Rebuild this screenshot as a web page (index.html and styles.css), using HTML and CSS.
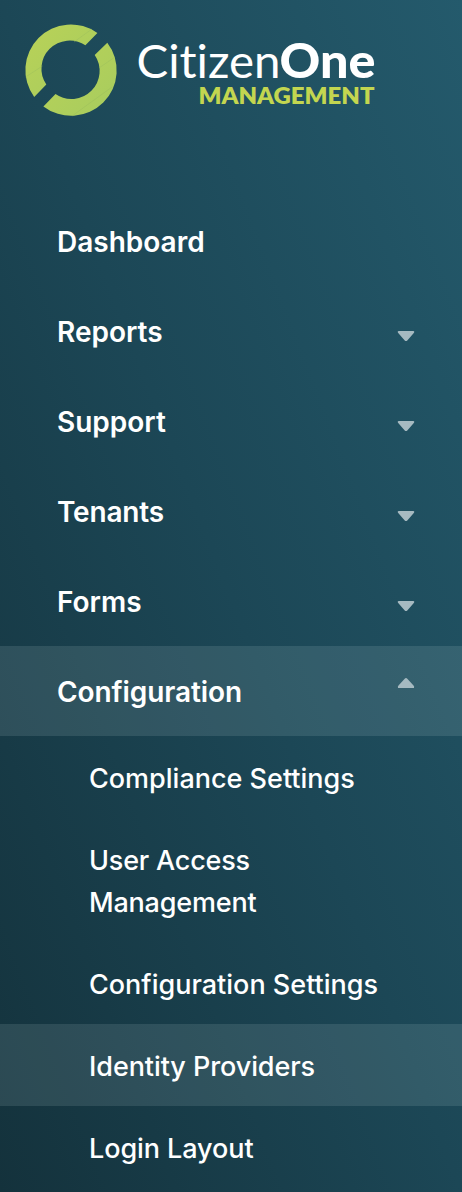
FILE: index.html
```html
<!DOCTYPE html>
<html lang="en">
<head>
<meta charset="utf-8">
<title>CitizenOne Management</title>
<link rel="stylesheet" href="styles.css">
</head>
<body>
<aside class="sidebar">
  <header class="brand">
    <svg class="logo" width="462" height="140" viewBox="0 0 462 140" role="img" aria-label="CitizenOne Management">
      <defs>
        <linearGradient id="ring" x1="0" y1="0" x2="1" y2="1">
          <stop offset="0" stop-color="#b9d257"/>
          <stop offset="1" stop-color="#a7cc5f"/>
        </linearGradient>
      </defs>
      <g transform="translate(-.3 -.3)">
        <path fill="url(#ring)" d="M97.700 33.300A45.500 45.500 0 0 0 34.500 97.200L46.600 84.800A28.200 28.200 0 0 1 85.700 45.600Z"/>
        <path fill="url(#ring)" d="M107.600 43A45.500 45.500 0 0 1 43.700 106.700L55.800 94.400A28.200 28.200 0 0 0 95 55.200Z"/>
      </g>
      <path class="seam" d="M25.500 77L42.500 66M74 42L92 29M99 68L115 57M72 116L112 87"/>
      <text class="logo-light" x="136.500" y="78" textLength="144" lengthAdjust="spacingAndGlyphs">Citizen</text>
      <text class="logo-bold" x="279.500" y="78" textLength="96" lengthAdjust="spacingAndGlyphs">One</text>
      <text class="logo-sub" x="198.500" y="103.700" textLength="176" lengthAdjust="spacingAndGlyphs">MANAGEMENT</text>
    </svg>
  </header>
  <nav class="menu">
    <a class="item"><span>Dashboard</span></a>
    <a class="item"><span>Reports</span><svg class="caret" viewBox="0 0 18 12"><path d="M1.500 1H16.500Q18 1.500 17 2.800L10.500 10.200Q9 12 7.500 10.200L1 2.800Q0 1.500 1.500 1Z"/></svg></a>
    <a class="item"><span>Support</span><svg class="caret" viewBox="0 0 18 12"><path d="M1.500 1H16.500Q18 1.500 17 2.800L10.500 10.200Q9 12 7.500 10.200L1 2.800Q0 1.500 1.500 1Z"/></svg></a>
    <a class="item"><span class="snug">Tenants</span><svg class="caret" viewBox="0 0 18 12"><path d="M1.500 1H16.500Q18 1.500 17 2.800L10.500 10.200Q9 12 7.500 10.200L1 2.800Q0 1.500 1.500 1Z"/></svg></a>
    <a class="item"><span>Forms</span><svg class="caret" viewBox="0 0 18 12"><path d="M1.500 1H16.500Q18 1.500 17 2.800L10.500 10.200Q9 12 7.500 10.200L1 2.800Q0 1.500 1.500 1Z"/></svg></a>
    <a class="item active"><span class="tight">Configuration</span><svg class="caret up" viewBox="0 0 18 12"><path d="M1 11H17Q17.500 9.500 16.500 8.600L10.300 1.800Q9 .4 7.700 1.800L1.500 8.600Q.5 9.500 1 11Z"/></svg></a>
    <div class="submenu">
      <a class="subitem">Compliance Settings</a>
      <a class="subitem snug">User Access Management</a>
      <a class="subitem">Configuration Settings</a>
      <a class="subitem active tight">Identity Providers</a>
      <a class="subitem tight">Login Layout</a>
    </div>
  </nav>
</aside>
</body>
</html>
```

FILE: styles.css
```css
* { box-sizing: border-box; }
body { margin: 0; }
.sidebar {
  width: 462px;
  height: 1192px;
  overflow: hidden;
  background: linear-gradient(to top right, #14323c, #1c4756 50%, #245a6c);
  color: #fff;
  font-family: Inter, "Liberation Sans", sans-serif;
}
.brand { height: 196px; }
.logo { display: block; }
.logo text { font-family: Lato, sans-serif; font-variant-ligatures: none; }
.seam { stroke: #98bb5c; stroke-width: .4; fill: none; }
.logo .logo-light { font-size: 47px; font-weight: 400; fill: #fff; }
.logo .logo-bold { font-size: 47px; font-weight: 900; fill: #fff; }
.logo .logo-sub { font-size: 22.500px; font-weight: 800; fill: #c3d650; }
.item {
  display: flex;
  align-items: center;
  justify-content: space-between;
  height: 90px;
  padding: 2px 47px 0 57px;
  font-size: 28px;
  line-height: 42px;
  font-weight: 600;
}
.caret { width: 18px; height: 12px; margin-top: 8px; fill: #a6bac1; }
.caret.up { margin-top: -18px; }
.active { background: rgba(240, 255, 255, .11); }
.subitem {
  display: block;
  padding: 22px 80px 18px 89px;
  font-size: 27px;
  line-height: 42px;
  font-weight: 500;
}
.tight { letter-spacing: -.08px; }
.snug { letter-spacing: -.2px; }
```
